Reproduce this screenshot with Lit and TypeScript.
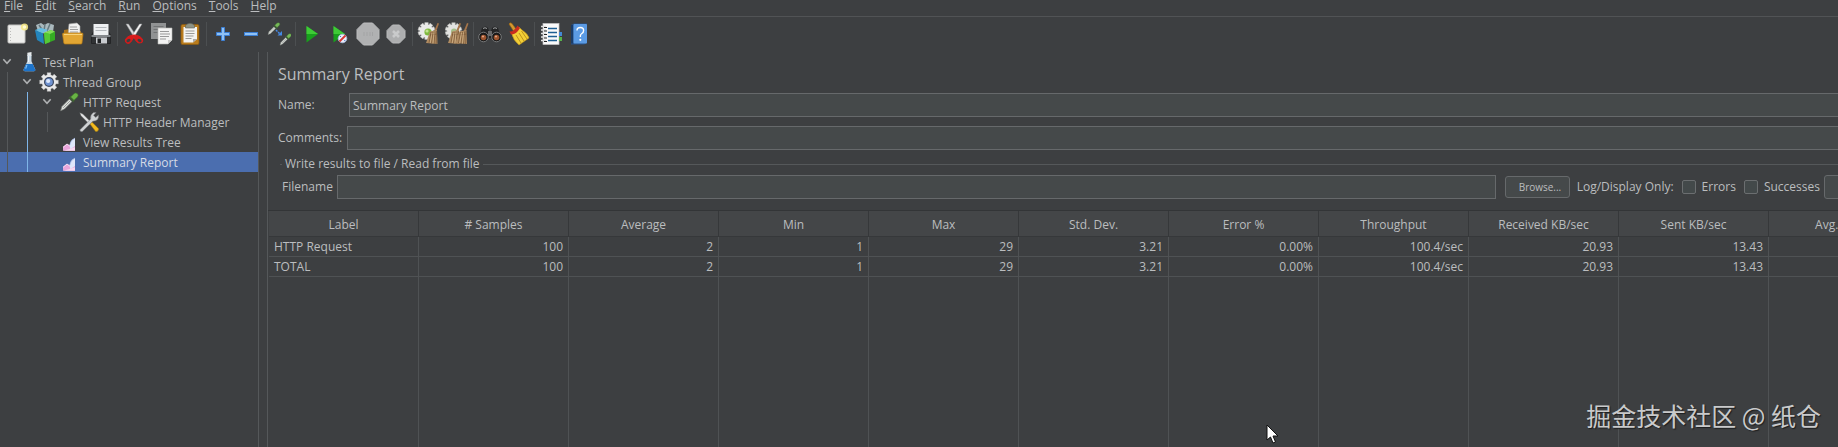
import { LitElement, html, css, svg, nothing } from "lit";
import { customElement, property } from "lit/decorators.js";

const gear = (cx: number, cy: number, r: number, teeth: number, fill: string, stroke: string) => svg`
  <g fill=${fill} stroke=${stroke} stroke-width=".6">
    ${Array.from({ length: teeth }, (_, i) => svg`<rect x=${cx - r * 0.2} y=${cy - r} width=${r * 0.4} height=${r} transform=${`rotate(${(i * 360) / teeth} ${cx} ${cy})`}></rect>`)}
  </g>
  <circle cx=${cx} cy=${cy} r=${r * 0.78} fill=${fill}></circle>`;

const bristles = svg`
  <path d="M20.500 1 L22 1.500 19 10 17 9.500Z" fill="#a5754a"></path>
  <path d="M13 9.500 20 8 20.500 22 9 21 11 15Z" fill="#b08c62"></path>
  <path d="M14 10 12 21M16 10 14.500 21.500M18 9.500 17 22M19.500 9 19.200 22M13 13 20 12" stroke="#7c5a38" stroke-width=".8" fill="none"></path>
  <path d="M15 11 13.200 21M17 10.500 16 21.500" stroke="#d5b78d" stroke-width=".7"></path>`;

const dropper = (c: string) => svg`
  <path d="M2 22.500 3.500 17.500 12.500 8.500 15.500 11.500 6.500 20.500Z" fill="#dfe2de" stroke="#7d827d" stroke-width=".8"></path>
  <path d="M5 19 13.500 10.500" stroke="#8b908b"></path>
  <path d="M11.500 7 13.500 5 19 10.500 17 12.500Z" fill="#3d5b34"></path>
  <path d="M14 6 18 2Q20 .5 22 2T22 6L18 10Z" fill=${c} stroke="#3f7d28" stroke-width=".7"></path>`;

const ICONS: Record<string, unknown> = {
  new: svg`<rect x="3" y="3" width="17" height="18" rx="1" fill="#efefed" stroke="#c4c4c2"></rect><path d="M5.500 6v13" stroke="#bcbcba" stroke-dasharray="1 2"></path><circle cx="19.500" cy="5" r="3.600" fill="#f5e886" opacity=".9"></circle><circle cx="19.500" cy="5" r="1.800" fill="#fffbd2"></circle>`,
  templates: svg`<path d="M3 3 8 1 11 3 15 1 21 3 20 10 6 12Z" fill="#aab9be"></path><path d="M6 3 10 9M12 2 11 9M17 2 14 9" stroke="#65797f" stroke-width="1.500"></path><path d="M2 8 10 11 11 22 4 18Z" fill="#2385bd"></path><path d="M2 8 8 6 15 8 10 11Z" fill="#66bee4"></path><path d="M11 11 18 8 22 10 22 18 12 22Z" fill="#35ac23"></path><path d="M11 11 17 12 22 9.500 18 8Z" fill="#83dd5a"></path><path d="M11 11 17 12 17 20 12 22Z" fill="#55c936"></path>`,
  open: svg`<path d="M3 8 9 7 11 9 20 9 20 20 3 20Z" fill="#ad741a"></path><path d="M8 2 16 1 19 4 19 14 7 14Z" fill="#f1f1f1" stroke="#aaa" stroke-width=".6"></path><path d="M9 5h7M9 7.500h8M9 10h8" stroke="#9f9f9f"></path><path d="M1.500 12Q1.500 11 3 11L21 11Q22 11 22 12L21 21Q21 22 20 22L4 22Q3 22 2.800 21Z" fill="#e2a633" stroke="#b97c16" stroke-width=".7"></path><path d="M3 12.500H21" stroke="#f7d37c"></path>`,
  save: svg`<path d="M2.500 13 5 9H19L21.500 13V21.500H2.500Z" fill="#303234" stroke="#1f2122" stroke-width=".8"></path><rect x="4.500" y="2" width="15" height="11" fill="#eef0f2"></rect><path d="M6.500 5.500h11M6.500 8.500h11" stroke="#b4b8bc"></path><rect x="2.500" y="13" width="19" height="2" fill="#85898d"></rect><rect x="7" y="15.500" width="11" height="6" fill="#c9ccd0"></rect><rect x="8.500" y="16.500" width="3.500" height="4.500" fill="#202224"></rect>`,
  cut: svg`<path d="M4 2 6.500 2 15 15 12.500 16Z" fill="#d9dadb" stroke="#8a8c8e" stroke-width=".5"></path><path d="M20 2 17.500 2 9 15 11.500 16Z" fill="#f5f5f5" stroke="#8a8c8e" stroke-width=".5"></path><path d="M11.500 13Q8 13 5 15.500T4 20.500Q7 23 9.500 19T12 15Q12.500 17 14.500 19.500T20 20.500Q22 18 19 15.500T12.500 13Z" fill="#d81a1a" stroke="#d81a1a"></path><ellipse cx="6.500" cy="18.500" rx="2.200" ry="1.500" fill="#3c3f41" transform="rotate(-35 6.500 18.500)"></ellipse><ellipse cx="17.500" cy="18.500" rx="2.200" ry="1.500" fill="#3c3f41" transform="rotate(35 17.500 18.500)"></ellipse>`,
  copy: svg`<rect x="1" y="1" width="15" height="16" fill="#909293"></rect><path d="M3.500 4.500h10M3.500 7.500h10M3.500 10.500h4" stroke="#717374"></path><path d="M8 6H22V18L18 22H8Z" fill="#f3f3f2" stroke="#b5b5b4" stroke-width=".6"></path><path d="M10 9.500h9M10 12h10M10 14.500h9M10 17h6" stroke="#999"></path><path d="M22 18H18V22Z" fill="#c9c9c8"></path>`,
  paste: svg`<rect x="3" y="2.500" width="18" height="20" rx="1.500" fill="#b97c1d" stroke="#8c5a0e" stroke-width=".7"></rect><path d="M5.500 5H19V17L15 20.500H5.500Z" fill="#f4f4f2"></path><path d="M7.500 9h9M7.500 11.500h9M7.500 14h8M7.500 16.500h6" stroke="#9b9b99"></path><path d="M7.500 6V3.500Q12 -1 16.500 3.500V6Z" fill="#8d9386" stroke="#5c6057" stroke-width=".6"></path><path d="M19 17H15V20.500Z" fill="#aaa"></path>`,
  plus: svg`<path d="M10.500 5.500h3v5h5v3h-5v5h-3v-5h-5v-3h5Z" fill="#8fc1f4" stroke="#3c7fd4"></path>`,
  minus: svg`<rect x="5.500" y="10.500" width="13" height="3" fill="#8fc1f4" stroke="#3c7fd4"></rect>`,
  toggle: svg`<g transform="translate(0 0) scale(.56)">${dropper("#78b85a")}</g><g transform="translate(12 11) scale(.54)">${dropper("#78b85a")}</g><path d="M9 8 13 12" stroke="#4489e6" stroke-width="1.500" stroke-dasharray="2 1"></path><path d="M15 13.500 15 9 10.500 13.500Z" fill="#4489e6"></path>`,
  play: svg`<path d="M6.500 4 18 12 6.500 20.500Z" fill="#18a01c"></path><path d="M6.500 4 18 12 6.500 12Z" fill="#3ecb36"></path>`,
  playNoPause: svg`<path d="M5.500 4 17 12 5.500 20.500Z" fill="#18a01c"></path><path d="M5.500 4 17 12 5.500 12Z" fill="#3ecb36"></path><circle cx="14.500" cy="16.500" r="4.300" fill="#e9eefa" stroke="#a9bbe0" stroke-width=".8"></circle><path d="M11.500 19.500 17.500 13.500" stroke="#d5352f" stroke-width="1.800"></path><path d="M12 14 13 15M16.500 18 17 19" stroke="#4878c8"></path>`,
  stop: svg`<path d="M7.500 1H16.500L23 7.500V16.500L16.500 23H7.500L1 16.500V7.500Z" fill="#b0b1b2" stroke="#bcbdbe"></path><path d="M8 10v4M11 10v4M14 10v4M16.500 10v4" stroke="#a3a4a5"></path>`,
  shutdown: svg`<path d="M8.500 3H15.500L21 8.500V15.500L15.500 21H8.500L3 15.500V8.500Z" fill="#adaeaf" stroke="#b9babb"></path><path d="M9 9 15 15M15 9 9 15" stroke="#c9cacb" stroke-width="2.600"></path>`,
  clear: svg`${gear(9.5, 9, 8.3, 10, "#e9eae8", "#bfc0be")}<circle cx="11" cy="10" r="3.600" fill="#7fb93f"></circle><circle cx="10" cy="9" r="1.600" fill="#c2e38e"></circle>${bristles}`,
  clearAll: svg`${gear(8.5, 9, 8.2, 10, "#e2e3e1", "#b5b6b4")}<circle cx="9" cy="9.500" r="3" fill="#a3bd88"></circle><g transform="translate(-6 0)">${bristles}</g><g transform="translate(1.500 0)">${bristles}</g>`,
  search: svg`<path d="M4 6Q8 3 10 6L11 9H13L14 6Q16 3 20 6L23 16H1Z" fill="#232425"></path><path d="M5 6.500Q7 5 9 6.500M15 6.500Q17 5 19 6.500" stroke="#a1a3a4" fill="none"></path><rect x="10" y="9" width="4" height="5" fill="#68696a"></rect><circle cx="5.500" cy="15" r="4.800" fill="#191919" stroke="#77797a"></circle><circle cx="18.500" cy="15" r="4.800" fill="#191919" stroke="#77797a"></circle><circle cx="5.500" cy="15.500" r="2.800" fill="#9c542e"></circle><circle cx="18.500" cy="15.500" r="2.800" fill="#9c542e"></circle><circle cx="5" cy="14.500" r="1.100" fill="#e0a183"></circle><circle cx="18" cy="14.500" r="1.100" fill="#e0a183"></circle>`,
  broom: svg`<path d="M3 2Q4 0 6 1.500L10 7 7.500 9Z" fill="#d5972f" stroke="#97630e" stroke-width=".6"></path><path d="M5.500 11Q9 11 13 5L16 8Q22 12 23 16L13 23Q7 18 5.500 11Z" fill="#f2cf37" stroke="#c1941a" stroke-width=".6"></path><path d="M3.500 9.500Q8 10 11.500 3.500L14 6Q10 13 5 12.500Z" fill="#c92c1f"></path><path d="M10 13 15 21M13 11 18 19M15.500 9 21 17" stroke="#bd921b"></path>`,
  functions: svg`<rect x="4" y="1.500" width="16" height="21" fill="#fafafa" stroke="#c4c4c4" stroke-width=".7"></rect><path d="M20 10h3v4h-3Z" fill="#4489d6"></path><path d="M20 15h3v4h-3Z" fill="#57b44a"></path><path d="M2 4.500h5M2 8h5M2 11.500h5M2 15h5M2 18.500h5" stroke="#e0e0e0" stroke-width="1.500"></path><path d="M5 5.500h3M5 9h3M5 12.500h3M5 16h3M5 19.500h3" stroke="#232323" stroke-width="1.200"></path><path d="M9 6.500h9M9 10.500h9M9 14.500h9M9 18.500h9" stroke="#1e5f93" stroke-width="1.300"></path>`,
  help: svg`<path d="M4 3 7 1.500H20V21L17 22.500H4Z" fill="#29538b"></path><rect x="6.500" y="2" width="13.500" height="19.500" rx="1" fill="#5b9be4"></rect><path d="M5 3V21.500" stroke="#16345e" stroke-width="1.500"></path><path d="M10 8.500Q10 5.500 13.300 5.500T16.600 8.500Q16.600 10.500 14.800 11.500T13.300 15" fill="none" stroke="#fff" stroke-width="1.400"></path><circle cx="13.300" cy="17.800" r="1.100" fill="#fff"></circle>`,
  flask: svg`<path d="M10 3.500V11L5.500 21Q5 23 7 23H18Q20 23 19.500 21L15 11V3.500Z" fill="#c9d9e6"></path><path d="M8.500 14.500H16.500L19.500 21Q20 23 18 23H7Q5 23 5.500 21Z" fill="#1d73c9"></path><path d="M9.500 15.500 8 20" stroke="#7fc0f6" stroke-width="1.500"></path><path d="M10 1 15 0V4.500H10Z" fill="#e5e9ec"></path><path d="M11.500 5v7" stroke="#fff"></path>`,
  group: svg`${gear(12, 12, 11, 8, "#e8e8e8", "#c2c2c2")}<circle cx="12" cy="12" r="6" fill="#39455c"></circle><circle cx="12" cy="12" r="4.600" fill="#6f92d0"></circle><circle cx="11" cy="10.800" r="2.500" fill="#dbe7fb"></circle>`,
  dropper: dropper("#69b345"),
  tools: svg`<path d="M1 1 4.500 2.500 15 13 13 15 2.500 4.500Z" fill="#e4e5e6" stroke="#77797a" stroke-width=".5"></path><path d="M13 14 15.500 12 23.500 20Q23.500 23.500 20 23.500Z" fill="#f1ba20" stroke="#a97c0c" stroke-width=".6"></path><path d="M1 21.500 14 8.500Q13 3.500 17.500 .5L20.500 .5 17.500 4 20 6.500 23.500 3.500Q24 11 16.500 11L4 23.500Q1.500 24 1 21.500Z" fill="#cfd2d4" stroke="#77797a" stroke-width=".6"></path>`,
  chart: svg`<path d="M3 22V16L9 11.500 13 14 21 6V22Z" fill="#e9a6dc"></path><path d="M13 14Q14 6 21 3V15L14 20Z" fill="#dfe7fa"></path><path d="M3 22 12 20 21 17V22Z" fill="#f8d9f1"></path><path d="M13 14Q14 6 21 3" fill="none" stroke="#a0b6e6"></path><path d="M3 17 9 12 13 15" fill="none" stroke="#fff"></path>`,
  chevron: svg`<path d="M6.500 8 12 14 17.500 8" fill="none" stroke="#afb1b3" stroke-width="2.400"></path>`,
};

@customElement("jm-icon")
class JmIcon extends LitElement {
  static styles = css`
    :host { display: block; width: 24px; height: 24px; flex: none; }
    svg { display: block; width: 100%; height: 100%; }
  `;
  @property() name = "";
  render() {
    return html`<svg viewBox="0 0 24 24" aria-hidden="true">${ICONS[this.name]}</svg>`;
  }
}

const MENUS = ["File", "Edit", "Search", "Run", "Options", "Tools", "Help"];

const TOOLS: [string, string][][] = [
  [["new", "New"], ["templates", "Templates"], ["open", "Open"], ["save", "Save"]],
  [["cut", "Cut"], ["copy", "Copy"], ["paste", "Paste"]],
  [["plus", "Expand All"], ["minus", "Collapse All"], ["toggle", "Toggle"]],
  [["play", "Start"], ["playNoPause", "Start no pauses"], ["stop", "Stop"], ["shutdown", "Shutdown"]],
  [["clear", "Clear"], ["clearAll", "Clear All"]],
  [["search", "Search"], ["broom", "Reset Search"]],
  [["functions", "Function Helper Dialog"], ["help", "Help"]],
];

interface Node { label: string; icon: string; guides: string[]; open?: boolean; selected?: boolean; }
const TREE: Node[] = [
  { label: "Test Plan", icon: "flask", guides: [], open: true },
  { label: "Thread Group", icon: "group", guides: ["line"], open: true },
  { label: "HTTP Request", icon: "dropper", guides: ["line", "active"], open: true },
  { label: "HTTP Header Manager", icon: "tools", guides: ["line", "active", "line"] },
  { label: "View Results Tree", icon: "chart", guides: ["line", "active"] },
  { label: "Summary Report", icon: "chart", guides: ["line", "active"], selected: true },
];

const COLUMNS = ["Label", "# Samples", "Average", "Min", "Max", "Std. Dev.", "Error %", "Throughput", "Received KB/sec", "Sent KB/sec", "Avg. Bytes"];
const ROWS = ["HTTP Request", "TOTAL"].map((l) => [l, "100", "2", "1", "29", "3.21", "0.00%", "100.4/sec", "20.93", "13.43", "213.5"]);

@customElement("app-root")
class AppRoot extends LitElement {
  static styles = css`
    :host {
      display: flex; flex-direction: column; height: 100vh; overflow: hidden; position: relative;
      background: #3d3f41; color: #bbbdbf; font: 12px/20px "Open Sans", "Noto Sans", sans-serif;
    }
    * { box-sizing: border-box; }
    button, input { font: inherit; color: inherit; }
    .menu { display: flex; gap: 12px; padding: 0 4px; height: 17px; flex: none; border-bottom: 1px solid #515355; }
    .menu button { border: 0; background: none; padding: 0; line-height: 12px; height: 12px; }
    .menu u { text-underline-offset: 1px; }
    .toolbar { display: flex; align-items: center; padding: 0 3px 1px; height: 35px; flex: none; }
    .tools { display: flex; }
    .tools + .tools { border-left: 1px solid #4c4f51; margin-left: 2px; padding-left: 2px; }
    .tool { width: 28px; height: 24px; padding: 0 2px; border: 0; background: none; }
    .body { display: flex; flex: 1; min-height: 0; }
    .tree { width: 259px; flex: none; margin: 0; padding: 0; list-style: none; border-right: 1px solid #55585a; }
    .node { display: flex; align-items: center; height: 20px; white-space: nowrap; }
    .node.selected { background: #4b6eaf; color: #d5dbe6; }
    .guide { width: 20px; height: 20px; flex: none; padding-left: 7px; }
    .guide::before { content: ""; display: block; width: 1px; height: 20px; background: #55585a; }
    .guide.active::before { background: #7fb5e8; }
    .toggle { width: 14px; height: 20px; padding: 0; border: 0; background: none; display: flex; align-items: center; }
    .toggle jm-icon { width: 16px; height: 16px; margin: 0 -1px; }
    .leaf { width: 14px; flex: none; }
    .slot { width: 29px; display: flex; justify-content: center; flex: none; }
    .label { padding-top: 2px; }
    .glyph { width: 20px; height: 20px; }
    .glyph.chart { width: 16px; height: 16px; margin-top: 4px; }
    .main { flex: 1; min-width: 0; overflow: hidden; margin-left: 8px; border-left: 1px solid #55585a; display: flex; flex-direction: column; }
    .form { padding-left: 10px; margin-right: -70px; flex: none; }
    h1 { font-size: 16px; line-height: 24px; font-weight: 400; margin: 10px 0 7px; }
    .field { display: flex; align-items: center; margin-bottom: 9px; }
    .field label { width: 69px; }
    .field.name label { width: 71px; }
    .field.comments { margin-bottom: 4px; }
    .text { flex: 1; min-width: 0; height: 24px; background: #45494a; border: 1px solid #66696b; padding: 0 3px; border-radius: 0; outline: 0; }
    fieldset { border: 0; border-top: 1px solid #55585a; margin: 0 0 0 2px; padding: 0 0 0 2px; min-width: 0; }
    legend { line-height: 20px; padding: 0 3px; }
    .file { display: flex; align-items: center; margin: 1px 0 11px; white-space: nowrap; }
    .file label.name { width: 55px; }
    .btn { height: 22px; border: 1px solid #66696b; border-radius: 3px; background: #45494a; padding: 0 13px; font-size: 10px; line-height: 18px; }
    .btn.browse { width: 65px; margin: 0 7px 0 9px; }
    .btn.configure { width: 84px; height: 24px; margin-left: 4px; font-size: 12px; }
    .check { display: flex; align-items: center; gap: 6px; margin-left: 8px; }
    .check input { appearance: none; width: 14px; height: 14px; margin: 0; border: 1px solid #6b6e70; border-radius: 2px; background: #43494a; }
    .scroll { flex: 1; min-height: 0; overflow: hidden; display: flex; border-top: 1px solid #333537; padding-left: 1px; }
    table { border-collapse: separate; border-spacing: 0; table-layout: fixed; width: 1650px; height: 100%; flex: none; }
    th, td { padding: 0 5px; border-right: 1px solid #4f5254; white-space: nowrap; font-weight: 400; }
    th { width: 150px; height: 26px; background: #444648; border-right-color: #36383a; border-bottom: 1px solid #36383a; padding-top: 2px; }
    td { height: 20px; text-align: right; border-bottom: 1px solid #4f5254; line-height: 19px; }
    td:first-child { text-align: left; }
    .rest td { height: auto; border-bottom: 0; }
    .watermark {
      position: absolute; right: 17px; bottom: 14px; font: 25px/36px "Noto Sans CJK SC", sans-serif;
      color: #c9cacb; text-shadow: 1px 1px 1px #1d1e1f; pointer-events: none;
    }
    .cursor { position: absolute; left: 1266px; top: 424px; width: 13px; height: 20px; }
  `;

  private node(n: Node) {
    return html`<li class="node ${n.selected ? "selected" : ""}" role="treeitem" aria-selected=${n.selected ? "true" : "false"}>
      ${n.guides.map((g) => html`<span class="guide ${g}"></span>`)}
      ${n.open ? html`<button class="toggle" aria-label="Collapse ${n.label}"><jm-icon name="chevron"></jm-icon></button>` : html`<span class="leaf"></span>`}
      <span class="slot"><jm-icon class="glyph ${n.icon}" name=${n.icon}></jm-icon></span><span class="label">${n.label}</span>
    </li>`;
  }

  render() {
    return html`
      <nav class="menu">${MENUS.map((m) => html`<button><u>${m[0]}</u>${m.slice(1)}</button>`)}</nav>
      <div class="toolbar" role="toolbar">
        ${TOOLS.map((g) => html`<div class="tools">${g.map(([i, l]) => html`<button class="tool" aria-label=${l}><jm-icon name=${i}></jm-icon></button>`)}</div>`)}
      </div>
      <div class="body">
        <ul class="tree" role="tree">${TREE.map((n) => this.node(n))}</ul>
        <main class="main">
          <div class="form">
            <h1>Summary Report</h1>
            <div class="field name"><label for="name">Name:</label><input class="text" id="name" value="Summary Report"></div>
            <div class="field comments"><label for="comments">Comments:</label><input class="text" id="comments"></div>
            <fieldset>
              <legend>Write results to file / Read from file</legend>
              <div class="file">
                <label class="name" for="filename">Filename</label><input class="text" id="filename">
                <button class="btn browse">Browse...</button>
                <span>Log/Display Only:</span>
                <label class="check"><input type="checkbox">Errors</label>
                <label class="check"><input type="checkbox">Successes</label>
                <button class="btn configure">Configure</button>
              </div>
            </fieldset>
          </div>
          <div class="scroll">
            <table>
              <thead><tr>${COLUMNS.map((c) => html`<th scope="col">${c}</th>`)}</tr></thead>
              <tbody>
                ${ROWS.map((r) => html`<tr>${r.map((c) => html`<td>${c}</td>`)}</tr>`)}
                <tr class="rest" aria-hidden="true">${COLUMNS.map(() => html`<td>${nothing}</td>`)}</tr>
              </tbody>
            </table>
          </div>
        </main>
      </div>
      <div class="watermark">掘金技术社区 @ 纸仓</div>
      <svg class="cursor" viewBox="0 0 13 20" aria-hidden="true"><path d="M1 1V16L4.500 13 7 19 9.500 18 7 12H12Z" fill="#fff" stroke="#111"></path></svg>
    `;
  }
}
